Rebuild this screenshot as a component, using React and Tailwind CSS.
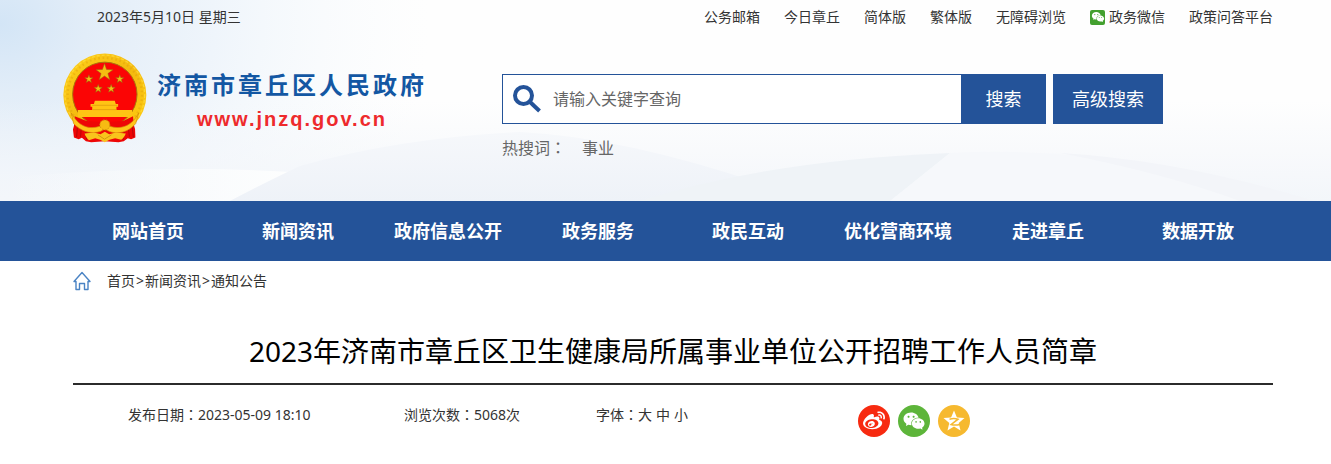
import { useState } from 'react';
import { AiFillWechat } from 'react-icons/ai';
import { FaWeibo } from 'react-icons/fa';

const TOP_LINKS = [
    { label: '公务邮箱' },
    { label: '今日章丘' },
    { label: '简体版' },
    { label: '繁体版' },
    { label: '无障碍浏览' },
    { label: '政务微信', wechat: true },
    { label: '政策问答平台' },
];

const NAV = ['网站首页', '新闻资讯', '政府信息公开', '政务服务', '政民互动', '优化营商环境', '走进章丘', '数据开放'];

const CRUMBS = ['首页', '新闻资讯', '通知公告'];

function starPoints(cx, cy, r, inner = 0.4) {
    const pts = [];
    for (let i = 0; i < 10; i++) {
        const a = (Math.PI / 5) * i - Math.PI / 2;
        const rad = i % 2 ? r * inner : r;
        pts.push(`${(cx + rad * Math.cos(a)).toFixed(1)},${(cy + rad * Math.sin(a)).toFixed(1)}`);
    }
    return pts.join(' ');
}

const Emblem = () => (
    <svg viewBox="36 24 256 270" className="w-[85px] h-[90px] shrink-0" aria-hidden="true">
        <defs>
            <linearGradient id="gold" x1="0" y1="0" x2="1" y2="1">
                <stop offset="0" stopColor="#ffd21a" />
                <stop offset="0.5" stopColor="#f4b90f" />
                <stop offset="1" stopColor="#ffcf10" />
            </linearGradient>
        </defs>
        <circle cx="165" cy="150" r="125" fill="url(#gold)" />
        <circle cx="165" cy="150" r="112" fill="none" stroke="#d99a0c" strokeWidth="7" strokeDasharray="5 8" opacity="0.4" />
        <circle cx="165" cy="150" r="120" fill="none" stroke="#ffe14a" strokeWidth="4" strokeDasharray="9 6" opacity="0.6" />
        <circle cx="165" cy="148" r="97" fill="#fb0505" stroke="#a8740c" strokeWidth="3" />
        <g fill="#f5bd12" stroke="#8e6a12" strokeWidth="1.5">
            <polygon points={starPoints(164, 82, 27)} />
            <polygon points={starPoints(117, 102, 13)} />
            <polygon points={starPoints(210, 102, 13)} />
            <polygon points={starPoints(145, 131, 13)} />
            <polygon points={starPoints(184, 131, 13)} />
        </g>
        {/* gate tower */}
        <path d="M135 167h60l3 10h7v8h-5v10h47v21H84v-21h43v-10h-5v-8h10z" fill="#ffc414" />
        <path d="M126 181h77M128 194h72" stroke="#d9990b" strokeWidth="2" />
        {/* drapery */}
        <path d="M74 214c2 14-1 26-5 40l3 24 14 5 10-4 12 10 16 3 41-3 41 3 16-3 12-9 10 3 13-5-1-26c-5-12-5-24-6-38l-30 14-55 4-55-4z" fill="#ee0606" />
        <path d="M83 240l-3 37M94 248l-2 28M247 240l4 37M236 248l3 28M107 262l3 22M223 262l-3 22" stroke="#b80606" strokeWidth="3" />
        <path d="M64 204c20 38 50 52 86 40l15-9 15 9c38 12 68-4 87-40l-9 32c-22 26-52 33-79 24l-14-8-14 8c-30 9-60-2-80-24z" fill="#ffc61a" stroke="#d18b08" strokeWidth="2" />
        <circle cx="165" cy="240" r="15" fill="#f7bb12" stroke="#cd8d0b" strokeWidth="3" strokeDasharray="5 4" />
        <path d="M104 266l28-3 20 5 13-7 13 7 20-5 30 3c-3 9-8 15-14 19l-18-5-17 5-14 7-14-7-15-5-19 6c-6-6-11-12-13-20z" fill="#f9c41c" />
        <path d="M144 270l20 13 21-13" fill="none" stroke="#d19a10" strokeWidth="3" />
    </svg>
);

// pale sky and hills behind the header
const Backdrop = () => (
    <svg viewBox="0 0 1331 201" preserveAspectRatio="none" className="absolute inset-0 w-full h-full" aria-hidden="true">
        <defs>
            <radialGradient id="sky" gradientUnits="userSpaceOnUse" cx="0" cy="30" r="430" gradientTransform="scale(1 0.8)">
                <stop offset="0" stopColor="#d3e5f6" />
                <stop offset="0.2" stopColor="#e2edf8" />
                <stop offset="0.5" stopColor="#eff5fb" />
                <stop offset="1" stopColor="#f8fbfd" stopOpacity="0" />
            </radialGradient>
            <linearGradient id="mist" x1="0" y1="0" x2="0" y2="1">
                <stop offset="0.5" stopColor="#f3f6fa" stopOpacity="0" />
                <stop offset="1" stopColor="#f3f6fa" />
            </linearGradient>
            <linearGradient id="hill" x1="0" y1="0" x2="0" y2="1">
                <stop offset="0" stopColor="#f6f8fb" />
                <stop offset="1" stopColor="#eef2f8" />
            </linearGradient>
            <linearGradient id="slope" x1="0" y1="0" x2="1" y2="0">
                <stop offset="0" stopColor="#fafcfd" stopOpacity="0" />
                <stop offset="1" stopColor="#fdfefe" />
            </linearGradient>
        </defs>
        <rect width="1331" height="201" fill="#fefefe" />
        <rect width="500" height="201" fill="url(#sky)" />
        <rect width="1331" height="201" fill="url(#mist)" />
        <path d="M0 178Q160 164 290 172L230 201H0z" fill="url(#slope)" />
        <path d="M230 201Q270 180 300 166Q400 138 520 132Q640 138 810 201z" fill="url(#hill)" />
        <path d="M640 201Q770 160 950 153L890 201z" fill="#eff3f7" />
        <path d="M890 201L950 153Q1110 144 1315 201z" fill="#f6f8fb" />
        <path d="M1060 153Q1180 160 1315 201H1240Q1160 172 1060 153z" fill="#f3f5f9" />
    </svg>
);

const SearchIcon = () => (
    <svg viewBox="0 0 28 28" className="w-7 h-7 shrink-0" fill="none" stroke="#245399" aria-hidden="true">
        <circle cx="10.5" cy="10.5" r="8.5" strokeWidth="4" />
        <path d="M16.5 16.5l10 9.5" strokeWidth="4" />
    </svg>
);

const HomeIcon = () => (
    <svg viewBox="0 0 18 20" className="w-[18px] h-5 shrink-0" fill="none" stroke="#4a83c4" strokeWidth="1.4" strokeLinejoin="round" aria-hidden="true">
        <path d="M9 1.5L1 10.5H3V18.5H6.5V12.5H11.5V18.5H15V10.5H17z" />
    </svg>
);

const QzoneIcon = () => (
    <svg viewBox="0 0 24 24" className="w-6 h-6" aria-hidden="true">
        <polygon points={starPoints(12, 12.5, 11, 0.45)} fill="#fff" />
        <path d="M7.5 10.2Q12 9 16 10.2L9 15.6Q13 16.7 18 15.4" fill="none" stroke="#f6b92f" strokeWidth="1.5" />
    </svg>
);

// full-width colon, centred in its box
const Colon = () => <span className="font-['Noto_Sans_CJK_TC',sans-serif] leading-none">：</span>;

export default function App() {
    const [keyword, setKeyword] = useState('');

    return (
        <div className="min-h-screen bg-white text-[#333] text-sm font-['Noto_Sans','Noto_Sans_CJK_SC',sans-serif]">
            <header className="relative pl-[15px]">
                <Backdrop />
                <div className="relative max-w-[1200px] mx-auto">
                    <div className="flex items-center justify-between h-[34px] pl-6">
                        <span>2023年5月10日 星期三</span>
                        <ul className="flex gap-6">
                            {TOP_LINKS.map((l) => (
                                <li key={l.label}>
                                    <a href="#" className="flex items-center gap-1">
                                        {l.wechat && (
                                            <span className="flex items-center justify-center w-[15px] h-[15px] bg-[#43a02f] rounded-xs">
                                                <AiFillWechat className="w-[14px] h-[14px] text-white" />
                                            </span>
                                        )}
                                        {l.label}
                                    </a>
                                </li>
                            ))}
                        </ul>
                    </div>

                    <div className="flex items-start h-[167px] pt-[19px]">
                        <a href="#" className="flex gap-[10px] w-[440px] -ml-[11px] shrink-0">
                            <Emblem />
                            <span className="flex flex-col items-center pt-4 font-bold">
                                <span className="text-2xl leading-8 tracking-[3px] text-[#1357a3]">济南市章丘区人民政府</span>
                                <span className="text-xl leading-9 tracking-[2px] text-[#ee2a2c] font-['Liberation_Sans',Arial,sans-serif]">www.jnzq.gov.cn</span>
                            </span>
                        </a>

                        <div className="pt-[21px]">
                            <form className="flex" onSubmit={(e) => e.preventDefault()}>
                                <label className="flex items-center gap-3 w-[459px] h-[50px] pl-[10px] bg-white border border-r-0 border-[#245399]">
                                    <SearchIcon />
                                    <input
                                        type="text"
                                        aria-label="关键字"
                                        placeholder="请输入关键字查询"
                                        value={keyword}
                                        onChange={(e) => setKeyword(e.target.value)}
                                        className="flex-1 h-full text-base outline-none placeholder:text-[#666]"
                                    />
                                </label>
                                <button type="submit" className="w-[85px] h-[50px] bg-[#245399] text-white text-lg">搜索</button>
                                <button type="button" className="w-[110px] h-[50px] ml-[7px] bg-[#245399] text-white text-lg">高级搜索</button>
                            </form>
                            <p className="flex gap-4 pt-3 text-base text-[#666]">
                                <span>热搜词<Colon /></span>
                                <a href="#">事业</a>
                            </p>
                        </div>
                    </div>
                </div>
            </header>

            <nav className="pl-[15px] bg-[#245399]">
                <ul className="grid grid-cols-8 max-w-[1200px] mx-auto">
                    {NAV.map((n) => (
                        <li key={n}>
                            <a href="#" className="flex items-center justify-center h-[60px] text-white text-lg font-bold">{n}</a>
                        </li>
                    ))}
                </ul>
            </nav>

            <main className="pl-[15px]">
                <div className="max-w-[1200px] mx-auto">
                    <div className="flex items-center gap-4 h-10">
                        <HomeIcon />
                        <p>
                            {CRUMBS.map((c, i) => (
                                <span key={c}>
                                    {i > 0 && <span className="mx-px">&gt;</span>}
                                    <a href="#">{c}</a>
                                </span>
                            ))}
                        </p>
                    </div>

                    <h1 className="pt-9 pb-[18px] text-[28px] leading-7 text-black text-center border-b-2 border-[#2b2b2b]">
                        2023年济南市章丘区卫生健康局所属事业单位公开招聘工作人员简章
                    </h1>

                    <div className="flex items-start pt-5 pl-[55px]">
                        <span className="w-[276px]">发布日期<Colon />2023-05-09 18:10</span>
                        <span className="w-[192px]">浏览次数<Colon />5068次</span>
                        <div className="flex w-[262px]">
                            <span>字体<Colon /></span>
                            <div className="flex gap-1">
                                <button type="button">大</button>
                                <button type="button">中</button>
                                <button type="button">小</button>
                            </div>
                        </div>
                        <div className="flex gap-2">
                            <a href="#" aria-label="微博" className="flex items-center justify-center w-8 h-8 rounded-full bg-[#f72a10] text-white">
                                <FaWeibo className="w-[22px] h-[22px]" />
                            </a>
                            <a href="#" aria-label="微信" className="flex items-center justify-center w-8 h-8 rounded-full bg-[#5db53a] text-white">
                                <AiFillWechat className="w-6 h-6" />
                            </a>
                            <a href="#" aria-label="QQ空间" className="flex items-center justify-center w-8 h-8 rounded-full bg-[#f6b92f]">
                                <QzoneIcon />
                            </a>
                        </div>
                    </div>
                </div>
            </main>
        </div>
    );
}
